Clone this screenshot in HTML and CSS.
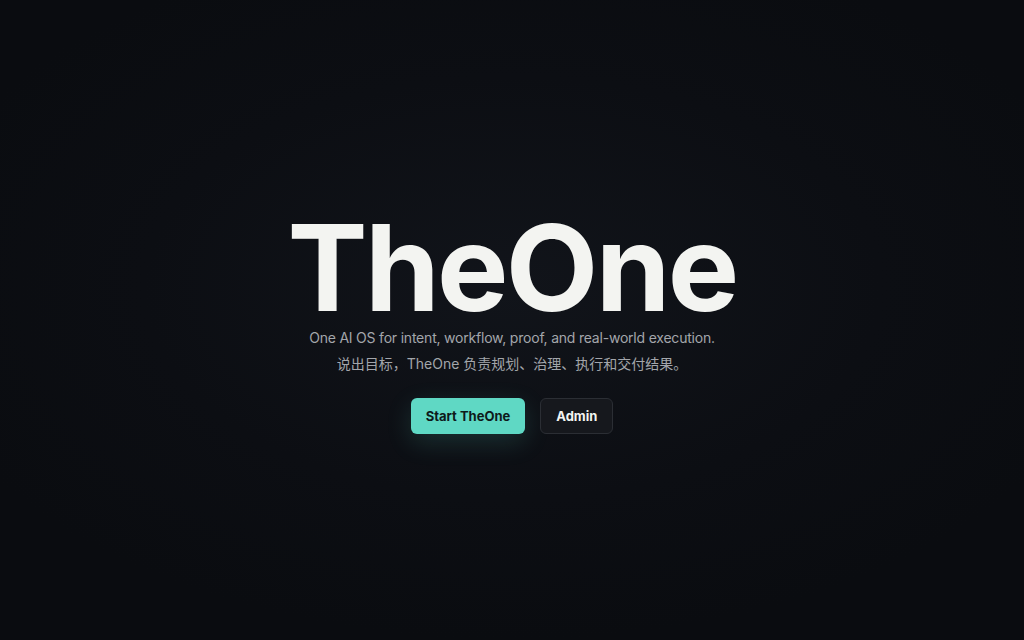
FILE: index.html
```html
<!DOCTYPE html>
<html lang="zh-CN">
<head>
<meta charset="utf-8">
<title>TheOne</title>
<link rel="stylesheet" href="styles.css">
</head>
<body>
<main class="hero">
  <h1 class="title">TheOne</h1>
  <p class="tagline">One AI OS for intent, workflow, proof, and real-world execution.</p>
  <p class="tagline-zh">说出目标，TheOne 负责规划、治理、执行和交付结果。</p>
  <div class="actions">
    <a class="btn btn-primary" href="#">Start TheOne</a>
    <a class="btn btn-secondary" href="#">Admin</a>
  </div>
</main>
</body>
</html>
```
FILE: styles.css
```css
html, body {
  margin: 0;
  height: 100%;
}
body {
  background: radial-gradient(ellipse 60% 55% at 50% 45%, #11141a 0%, #0c0e13 60%, #0a0c10 100%);
  font-family: Inter, "Noto Sans CJK SC", sans-serif;
  color: #f3f4f1;
}
.hero {
  height: 100%;
  display: flex;
  flex-direction: column;
  align-items: center;
  justify-content: center;
  padding-top: 2px;
  box-sizing: border-box;
}
.title {
  margin: 0;
  font-size: 120px;
  font-weight: 700;
  letter-spacing: -0.022em;
  line-height: 1;
  color: #f3f4f1;
}
.tagline {
  margin: 0;
  font-size: 14px;
  letter-spacing: -0.015em;
  color: #a3a6ab;
  line-height: 20px;
}
.tagline-zh {
  margin: 6px 0 0;
  font-size: 14px;
  color: #a3a6ab;
  line-height: 20px;
  font-family: Inter, "Noto Sans CJK SC", sans-serif;
}
.actions {
  display: flex;
  gap: 15px;
  margin-top: 24px;
}
.btn {
  display: inline-flex;
  align-items: center;
  justify-content: center;
  height: 36px;
  padding: 0 15px;
  border-radius: 6px;
  font-size: 13px;
  font-weight: 700;
  text-decoration: none;
  box-sizing: border-box;
}
.btn-primary {
  background: #5fd8c4;
  color: #0e1a1a;
  box-shadow: 0 8px 26px rgba(95, 216, 196, 0.16);
}
.btn-secondary {
  background: #16181d;
  color: #f3f4f1;
  border: 1px solid #2b2e34;
}
```
